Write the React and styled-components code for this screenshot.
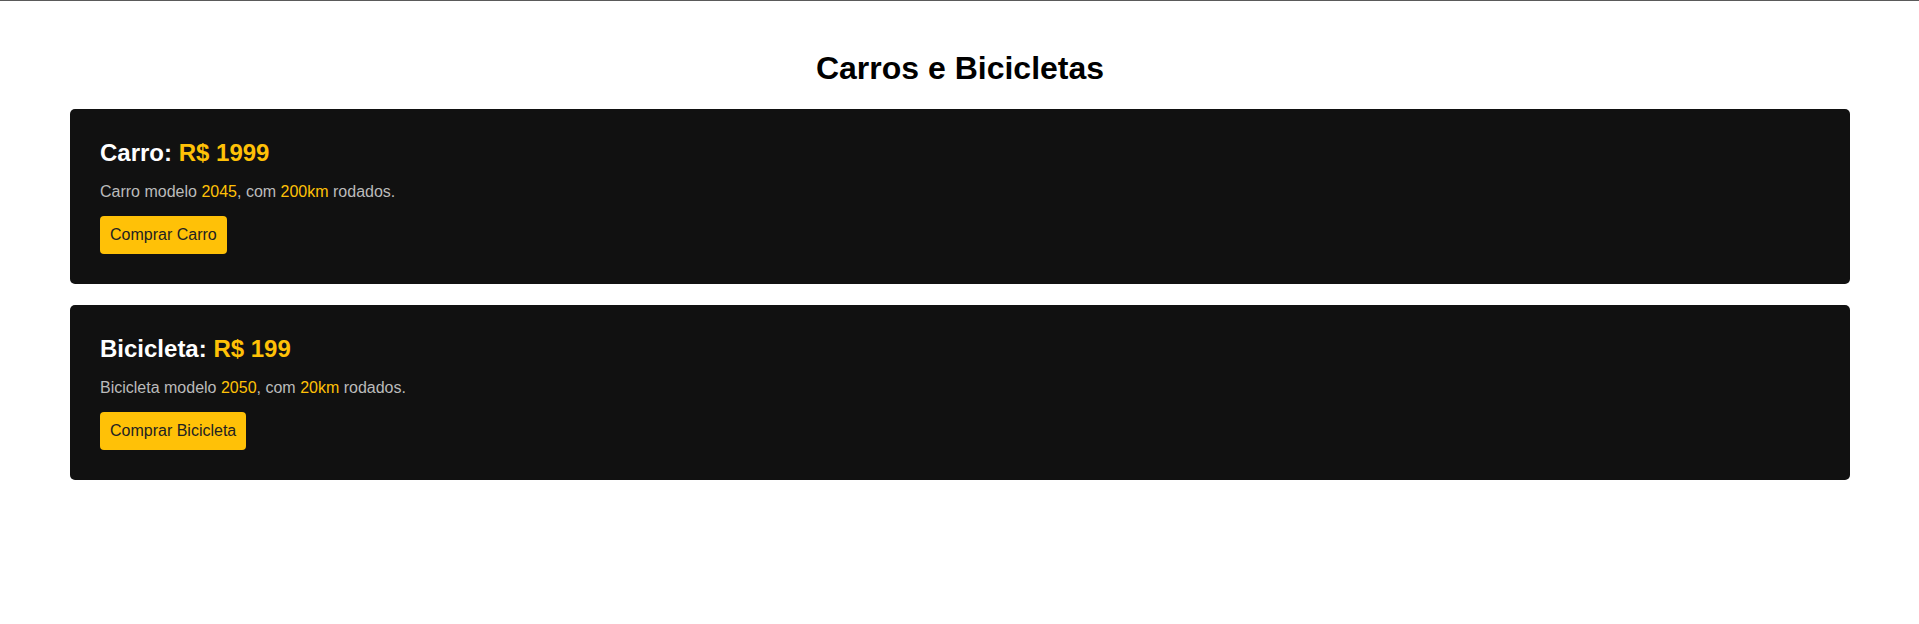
import React from 'react';
import styled, { createGlobalStyle } from 'styled-components';

const GlobalStyle = createGlobalStyle`
    html, body {
        margin: 0;
        padding: 0;
        background: #fff;
        font-family: "Liberation Sans", Arial, sans-serif;
    }
`;

const Page = styled.div`
    border-top: 1px solid #5a5a5a;
    padding: 28px 69px 40px 70px;
`;

const Title = styled.h1`
    margin: 21px 0 22px;
    font-size: 32px;
    font-weight: bold;
    text-align: center;
    color: #000;
`;

const CardList = styled.div`
    display: flex;
    flex-direction: column;
    gap: 21px;
`;

const Card = styled.div`
    background: #111;
    border-radius: 5px;
    padding: 30px;
`;

const CardTitle = styled.h2`
    margin: 0 0 16px;
    font-size: 24px;
    font-weight: bold;
    color: #fff;
`;

const Highlight = styled.span`
    color: #ffc107;
`;

const Description = styled.p`
    margin: 0 0 15px;
    font-size: 16px;
    color: #bbb;
`;

const BuyButton = styled.button`
    display: inline-block;
    border: 0;
    border-radius: 4px;
    padding: 10px;
    background: #ffc107;
    color: #222;
    font-family: inherit;
    font-size: 16px;
    cursor: pointer;
`;

const produtos = [
    { nome: 'Carro', preco: 1999, modelo: 2045, km: 200 },
    { nome: 'Bicicleta', preco: 199, modelo: 2050, km: 20 },
];

const App = () => {
    return (
        <>
            <GlobalStyle />
            <Page>
                <Title>Carros e Bicicletas</Title>
                <CardList>
                    {produtos.map((p) => (
                        <Card key={p.nome}>
                            <CardTitle>
                                {p.nome}: <Highlight>R$ {p.preco}</Highlight>
                            </CardTitle>
                            <Description>
                                {p.nome} modelo <Highlight>{p.modelo}</Highlight>, com{' '}
                                <Highlight>{p.km}km</Highlight> rodados.
                            </Description>
                            <BuyButton>Comprar {p.nome}</BuyButton>
                        </Card>
                    ))}
                </CardList>
            </Page>
        </>
    );
};

export default App;
